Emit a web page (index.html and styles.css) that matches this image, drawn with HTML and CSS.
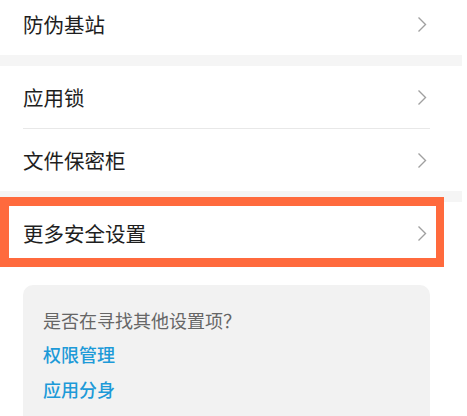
FILE: index.html
```html
<!DOCTYPE html>
<html>
<head>
  <meta http-equiv="Content-Type" content="text/html; charset=UTF-8">
  <title>安全设置</title>
  <link rel="stylesheet" href="styles.css">
</head>
<body>
  <div class="page">
    <div class="group">
      <div class="row">
        <span class="label">防伪基站</span>
        <svg class="chevron" width="10" height="17" viewBox="0 0 10 17"><path d="M1.5 1.5 L8.5 8.5 L1.5 15.5" fill="none" stroke="#a0a0a0" stroke-width="1.4"/></svg>
      </div>
    </div>
    <div class="gap"></div>
    <div class="group">
      <div class="row">
        <span class="label">应用锁</span>
        <svg class="chevron" width="10" height="17" viewBox="0 0 10 17"><path d="M1.5 1.5 L8.5 8.5 L1.5 15.5" fill="none" stroke="#a0a0a0" stroke-width="1.4"/></svg>
      </div>
      <div class="divider"></div>
      <div class="row">
        <span class="label">文件保密柜</span>
        <svg class="chevron" width="10" height="17" viewBox="0 0 10 17"><path d="M1.5 1.5 L8.5 8.5 L1.5 15.5" fill="none" stroke="#a0a0a0" stroke-width="1.4"/></svg>
      </div>
    </div>
    <div class="gap"></div>
    <div class="group">
      <div class="row highlighted">
        <span class="label">更多安全设置</span>
        <svg class="chevron" width="10" height="17" viewBox="0 0 10 17"><path d="M1.5 1.5 L8.5 8.5 L1.5 15.5" fill="none" stroke="#a0a0a0" stroke-width="1.4"/></svg>
        <div class="mark"></div>
      </div>
    </div>
    <div class="hint">
      <div class="hint-title">是否在寻找其他设置项？</div>
      <div class="hint-link">权限管理</div>
      <div class="hint-link">应用分身</div>
    </div>
  </div>
</body>
</html>
```
FILE: styles.css
```css
body {
  margin: 0;
  background: #fff;
  font-family: "Noto Sans CJK SC", "Noto Sans", sans-serif;
  overflow: hidden;
}
.page {
  width: 462px;
  margin-top: -7px;
}
.group {
  background: #fff;
}
.gap {
  height: 11px;
  background: #f5f5f5;
}
.row {
  position: relative;
  height: 62px;
  display: flex;
  align-items: center;
  justify-content: space-between;
  padding: 0 35px 0 23px;
}
.label {
  font-size: 20.5px;
  color: #1e1e1e;
}
.divider {
  height: 1px;
  margin: 0 32px 0 23px;
  background: #e8e8e8;
}
.mark {
  position: absolute;
  left: 0;
  right: 18px;
  top: -5px;
  bottom: -3px;
  border: 9px solid #ff6a3d;
  border-right-width: 8px;
}
.hint {
  margin: 21px 32px 0 23px;
  padding: 18px 20px 20px;
  background: #f2f2f2;
  border-radius: 10px;
}
.hint-title {
  line-height: 34px;
  font-size: 18px;
  color: #666;
}
.hint-link {
  line-height: 34.5px;
  font-size: 18px;
  font-weight: 500;
  color: #1d9ad8;
}
```
